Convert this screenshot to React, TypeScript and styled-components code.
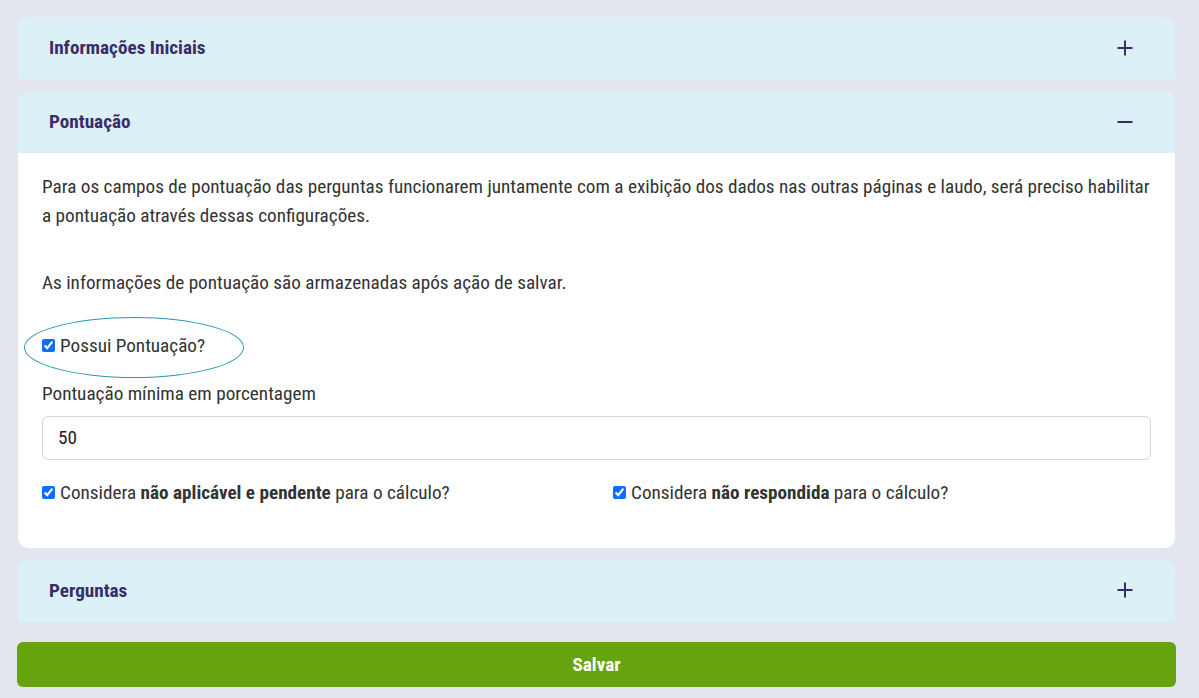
import React from "react";
import styled, { createGlobalStyle } from "styled-components";

const GlobalStyle = createGlobalStyle`
  html, body { margin: 0; padding: 0; background: #e3e6ee; }
  body { font-family: "Roboto Condensed", "Liberation Sans Narrow", "DejaVu Sans Condensed", sans-serif; color: #333; }
  * { box-sizing: border-box; }
`;

const Page = styled.div`
  padding: 17px 24px 11px 18px;
  display: flex;
  flex-direction: column;
  gap: 12px;
`;

const Card = styled.section<{ $open?: boolean }>`
  background: #dcf0f7;
  border-radius: ${(p) => (p.$open ? "10px" : "10px 10px 0 0")};
  overflow: hidden;
`;

const Header = styled.div`
  height: 62px;
  display: flex;
  align-items: center;
  justify-content: space-between;
  padding: 0 41px 1px 31px;
`;

const Title = styled.h2`
  margin: 0;
  font-size: 19.2px;
  font-weight: 700;
  color: #3a2c68;
`;

const Toggle = styled.svg`
  width: 18px;
  height: 18px;
  color: #3a2c68;
`;

const Body = styled.div`
  background: #fff;
  padding: 20px 24px 43px 24px;
  font-size: 19.2px;
  line-height: 28.8px;
`;

const Para = styled.p<{ $mb: number }>`
  margin: 0 0 ${(p) => p.$mb}px 0;
`;

const CheckWrap = styled.div`
  position: relative;
  display: inline-flex;
  align-items: center;
  gap: 5px;
  height: 24px;
`;

const Check = styled.input`
  width: 13px;
  height: 13px;
  margin: 0;
  accent-color: #0d6efd;
`;

const Ellipse = styled.span`
  position: absolute;
  left: -18px;
  top: -17px;
  width: 220px;
  height: 61px;
  border: 1px solid #2a98b4;
  border-radius: 50%;
  pointer-events: none;
`;

const FieldLabel = styled.label`
  display: block;
  margin-top: 19px;
  margin-bottom: 7px;
`;

const Input = styled.input`
  width: 100%;
  height: 44px;
  border: 1px solid #d4d4e4;
  border-radius: 6px;
  padding: 0 15px;
  font: inherit;
  font-size: 19.2px;
  color: #222;
  outline: none;
`;

const OptionRow = styled.div`
  display: grid;
  grid-template-columns: 571px 1fr;
  margin-top: 21px;
`;

const Save = styled.button`
  margin: 8px -1px 0 -1px;
  height: 45px;
  border: none;
  border-radius: 6px;
  background: #65a30f;
  color: #fff;
  font: inherit;
  font-size: 19.2px;
  font-weight: 700;
`;

const Plus = () => (
  <Toggle viewBox="0 0 18 18" fill="none" stroke="currentColor" strokeWidth="2">
    <path d="M9 1.5v15M1.5 9h15" />
  </Toggle>
);

const Minus = () => (
  <Toggle viewBox="0 0 18 18" fill="none" stroke="currentColor" strokeWidth="2">
    <path d="M1.5 9h15" />
  </Toggle>
);

export default function App() {
  return (
    <>
      <GlobalStyle />
      <Page>
        <Card>
          <Header>
            <Title>Informações Iniciais</Title>
            <Plus />
          </Header>
        </Card>
        <Card $open>
          <Header>
            <Title>Pontuação</Title>
            <Minus />
          </Header>
          <Body>
            <Para $mb={38}>
              Para os campos de pontuação das perguntas funcionarem juntamente com a exibição dos dados nas outras páginas e laudo, será preciso habilitar a pontuação através dessas configurações.
            </Para>
            <Para $mb={35}>As informações de pontuação são armazenadas após ação de salvar.</Para>
            <CheckWrap>
              <Ellipse />
              <Check type="checkbox" defaultChecked />
              <span>Possui Pontuação?</span>
            </CheckWrap>
            <FieldLabel>Pontuação mínima em porcentagem</FieldLabel>
            <Input defaultValue="50" />
            <OptionRow>
              <CheckWrap>
                <Check type="checkbox" defaultChecked />
                <span>
                  Considera <b>não aplicável e pendente</b> para o cálculo?
                </span>
              </CheckWrap>
              <CheckWrap>
                <Check type="checkbox" defaultChecked />
                <span>
                  Considera <b>não respondida</b> para o cálculo?
                </span>
              </CheckWrap>
            </OptionRow>
          </Body>
        </Card>
        <Card>
          <Header>
            <Title>Perguntas</Title>
            <Plus />
          </Header>
        </Card>
        <Save>Salvar</Save>
      </Page>
    </>
  );
}
